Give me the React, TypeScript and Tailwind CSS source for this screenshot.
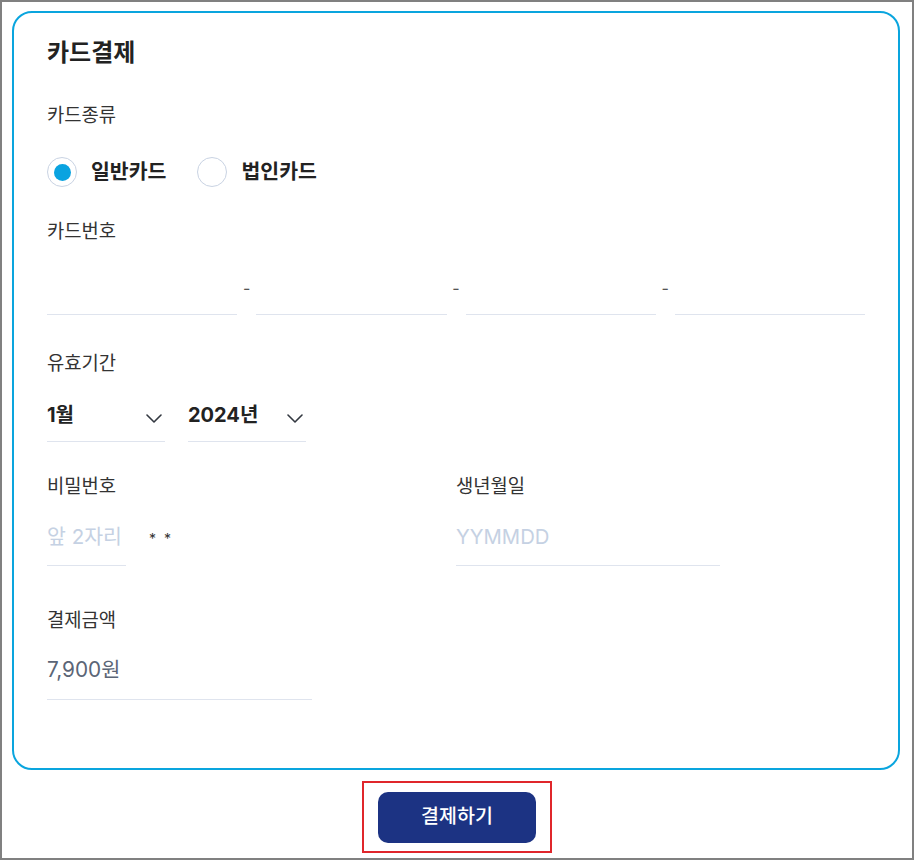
import React from 'react';

const font = { fontFamily: 'Inter, "Noto Sans CJK KR", sans-serif' };

const Chevron = () => (
  <svg width="16" height="9" viewBox="0 0 16 9" fill="none" className="mt-[6px]">
    <path d="M1 1l7 7 7-7" stroke="#333840" strokeWidth="1.6" strokeLinecap="round" strokeLinejoin="round" />
  </svg>
);

const Label: React.FC<{ children: React.ReactNode }> = ({ children }) => (
  <p className="text-[18.8px] leading-[26px] text-[#333]">{children}</p>
);

const Radio: React.FC<{ checked?: boolean; label: string }> = ({ checked, label }) => (
  <label className="flex items-center gap-[14px]">
    <span className="flex h-[30px] w-[30px] items-center justify-center rounded-full border border-[#c9d3e3] bg-white">
      {checked && <span className="h-[17px] w-[17px] rounded-full bg-[#0aa3e0]" />}
    </span>
    <span className="text-[20.5px] font-bold leading-[28px] text-[#222]">{label}</span>
  </label>
);

export default function App() {
  return (
    <div style={font} className="h-[860px] w-[914px] border-2 border-[#808080] bg-white">
      <div className="ml-[10px] mr-[12px] mt-[9px] rounded-[20px] border-2 border-[#0aa5de] px-[33px] pt-[24px] pb-[68px]">
        <h2 className="text-[24px] font-bold leading-[32px] text-[#222]">카드결제</h2>

        <div className="mt-[34px]">
          <Label>카드종류</Label>
        </div>
        <div className="mt-[28px] flex items-center gap-[31px]">
          <Radio checked label="일반카드" />
          <Radio label="법인카드" />
        </div>

        <div className="mt-[32px]">
          <Label>카드번호</Label>
        </div>
        <div className="mt-[22px] flex items-end">
          {[0, 1, 2, 3].map((i) => (
            <React.Fragment key={i}>
              {i > 0 && (
                <span className="w-[19px] self-center pb-[6px] text-center text-[16px] text-[#555]">-</span>
              )}
              <div className="h-[48px] flex-1 border-b border-[#dfe4ee]" />
            </React.Fragment>
          ))}
        </div>

        <div className="mt-[36px]">
          <Label>유효기간</Label>
        </div>
        <div className="mt-[24px] flex gap-[23px]">
          {['1월', '2024년'].map((v) => (
            <div key={v} className="flex w-[118px] items-center justify-between border-b border-[#dfe4ee] pb-[12px] pr-[3px]">
              <span className="text-[20px] font-bold leading-[28px] text-[#222]">{v}</span>
              <Chevron />
            </div>
          ))}
        </div>

        <div className="mt-[32px] grid grid-cols-2">
          <div>
            <Label>비밀번호</Label>
            <div className="mt-[23px] flex items-start">
              <div className="w-[79px] border-b border-[#dfe4ee] pb-[14px]">
                <span className="whitespace-nowrap text-[20.5px] leading-[28px] text-[#c5d1e3]">앞 2자리</span>
              </div>
              <span className="ml-[23px] mt-[6px] text-[14px] leading-[20px] tracking-[2px] text-[#333]">* *</span>
            </div>
          </div>
          <div>
            <Label>생년월일</Label>
            <div className="mt-[23px] w-[264px] border-b border-[#dfe4ee] pb-[14px]">
              <span className="text-[20.3px] leading-[28px] text-[#c5d1e3]">YYMMDD</span>
            </div>
          </div>
        </div>

        <div className="mt-[42px]">
          <Label>결제금액</Label>
        </div>
        <div className="mt-[22px] w-[265px] border-b border-[#dfe4ee] pb-[15px]">
          <span className="text-[20.8px] leading-[28px] text-[#5b6576]">7,900원</span>
        </div>
      </div>

      <div className="mt-[11px] flex justify-center">
        <div className="flex h-[72px] w-[190px] items-center justify-center border-2 border-[#e0262b]">
          <button className="h-[51px] w-[158px] rounded-[10px] bg-[#1c3383] text-[19.5px] font-medium text-white">
            결제하기
          </button>
        </div>
      </div>
    </div>
  );
}
